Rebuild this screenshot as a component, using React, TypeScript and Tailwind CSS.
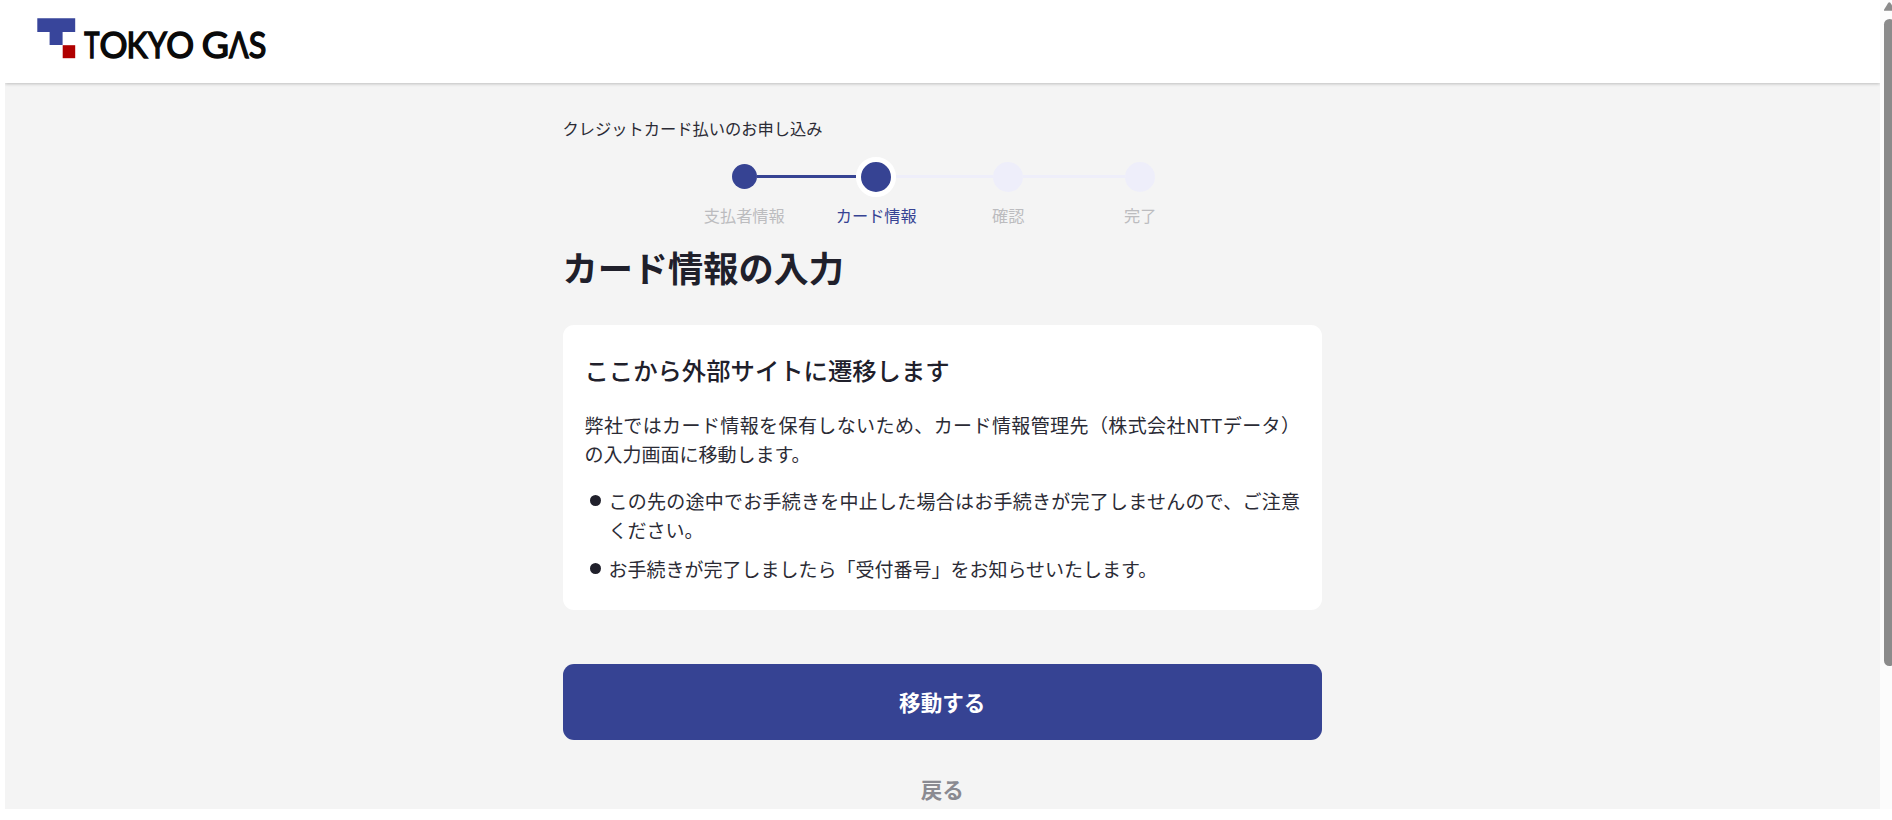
import React from 'react';

interface Step {
  label: string;
  status: 'done' | 'current' | 'upcoming';
}

const steps: Step[] = [
  { label: '支払者情報', status: 'done' },
  { label: 'カード情報', status: 'current' },
  { label: '確認', status: 'upcoming' },
  { label: '完了', status: 'upcoming' },
];

const notes = [
  'この先の途中でお手続きを中止した場合はお手続きが完了しませんので、ご注意ください。',
  'お手続きが完了しましたら「受付番号」をお知らせいたします。',
];

// Wordmark letters with their left edge and advance width
const logoLetters = [
  { char: 'T', x: 47.2, width: 15.2 },
  { char: 'O', x: 62.4, width: 28 },
  { char: 'K', x: 89.4, width: 21 },
  { char: 'Y', x: 111, width: 19 },
  { char: 'O', x: 129.2, width: 27.8 },
  { char: 'G', x: 164.8, width: 27.2 },
  { char: 'Λ', x: 192, width: 19.6 },
  { char: 'S', x: 211.8, width: 17.6 },
];

const circleStyles = {
  done: 'w-[25px] h-[25px] bg-[#364393]',
  current: 'w-10 h-10 bg-[#364393] border-5 border-white',
  upcoming: 'w-[30px] h-[30px] bg-[#eeeefa]',
};

const Logo: React.FC = () => (
  <svg width="232" height="48" viewBox="0 0 232 48" className="block">
    <path d="M0.3 1.3h37.9v13.6h-12.6v13h-13v-13h-12.3z" fill="#38459b" />
    <rect x="25.7" y="28.2" width="12.5" height="13" fill="#b00000" />
    <g fontFamily="Lato, sans-serif" fontSize="36.2" fill="#0a0a0a" stroke="#0a0a0a" strokeWidth="1.5">
      {logoLetters.map((l, i) => (
        <text key={i} x={l.x} y="41" textLength={l.width} lengthAdjust="spacingAndGlyphs">{l.char}</text>
      ))}
    </g>
  </svg>
);

const Stepper: React.FC = () => (
  <ol className="flex justify-center">
    {steps.map((step, i) => (
      <li key={step.label} className="w-[132px] flex flex-col items-center">
        <div className="w-full h-10 flex items-center">
          <span className={`flex-1 h-[3px] ${i === 0 ? '' : i === 1 ? 'bg-[#364393]' : 'bg-[#eeeefa]'}`} />
          <span className={`shrink-0 rounded-full ${circleStyles[step.status]}`} />
          <span className={`flex-1 h-[3px] ${i === 3 ? '' : i === 0 ? 'bg-[#364393]' : 'bg-[#eeeefa]'}`} />
        </div>
        <span className={`mt-[6px] text-[16.2px] leading-6 ${step.status === 'current' ? 'text-[#364393]' : 'text-[#bcbcbf]'}`}>
          {step.label}
        </span>
      </li>
    ))}
  </ol>
);

const Scrollbar: React.FC = () => (
  <div className="w-3 h-[809px] shrink-0 bg-[#fcfcfc] pl-[3.5px] overflow-hidden">
    <svg width="11" height="11" viewBox="0 0 11 11" className="block">
      <path d="M0 10.8V9.8L4.3 2.8Q5.3 1.6 6.3 2.8L11 9.8V10.8Z" fill="#8b8b8b" />
    </svg>
    <div className="mt-[7.5px] w-[11px] h-[647px] rounded-full bg-[#8b8b8b]" />
  </div>
);

export default function App() {
  return (
    <div lang="ja" className="flex h-[820px] overflow-hidden bg-white pl-[5px] font-['Noto_Sans_CJK_JP',sans-serif] text-[#20202b]">
      <div className="flex-1 h-[809px] overflow-hidden bg-[#f4f4f4]">
        <header className="relative h-[83px] bg-white pl-8 pt-[17px] shadow-[0_1px_3px_rgba(0,0,0,0.22)]">
          <Logo />
        </header>

        <main className="w-[759.5px] ml-[557.5px] pt-[33px]">
          <p className="text-[16.25px] leading-6 text-[#2b2b35]">クレジットカード払いのお申し込み</p>
          <div className="mt-[16.5px]">
            <Stepper />
          </div>
          <h1 className="mt-[13.5px] text-[35.2px] leading-[53px] font-bold">カード情報の入力</h1>

          {/* Redirect notice */}
          <section className="mt-[32px] h-[284.5px] rounded-[11px] bg-white px-[22px] pt-[27px]">
            <h2 className="text-[24.35px] leading-9 font-medium">ここから外部サイトに遷移します</h2>
            <p className="mt-[21.5px] text-[19px] leading-[29.5px] text-justify text-[#2b2b35]">
              弊社ではカード情報を保有しないため、カード情報管理先（株式会社NTTデータ）の入力画面に移動します。
            </p>
            <ul className="mt-[17px] space-y-[9px] text-[19px] leading-[29.5px] text-[#2b2b35]">
              {notes.map(note => (
                <li key={note} className="flex">
                  <span className="mt-[9.5px] ml-[5px] mr-[8px] w-[11px] h-[11px] shrink-0 rounded-full bg-[#20202b]" />
                  <span className="flex-1 text-justify">{note}</span>
                </li>
              ))}
            </ul>
          </section>

          <button className="mt-[54.5px] w-full h-[76px] rounded-[11px] bg-[#364393] text-[21.6px] font-bold text-white">
            移動する
          </button>
          <button className="mt-[31px] w-full text-[21.6px] leading-9 font-bold text-[#8a8a91]">戻る</button>
        </main>
      </div>
      <Scrollbar />
    </div>
  );
}
